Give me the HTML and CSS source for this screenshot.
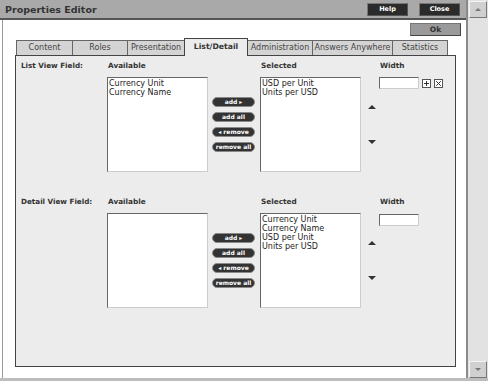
FILE: index.html
```html
<!DOCTYPE html>
<html lang="en">
<head>
  <meta charset="UTF-8" />
  <title>Properties Editor</title>
  <link rel="stylesheet" href="styles.css">
</head>
<body>
  <div class="window">
    <div class="main">
      <div class="titlebar">
        <span class="title">Properties Editor</span>
        <div class="title-btns">
          <button class="dark-btn">Help</button>
          <button class="dark-btn">Close</button>
        </div>
      </div>

      <div class="content">
        <div class="ok-row">
          <button class="ok-btn">Ok</button>
        </div>

        <div class="tabs">
          <div class="tab tab-content">Content</div>
          <div class="tab tab-roles">Roles</div>
          <div class="tab tab-pres">Presentation</div>
          <div class="tab tab-list active">List/Detail</div>
          <div class="tab tab-admin">Administration</div>
          <div class="tab tab-answers">Answers Anywhere</div>
          <div class="tab tab-stats last">Statistics</div>
        </div>

        <div class="panel">
          <!-- list view -->
          <div class="section">
            <div class="label">List View Field:</div>
            <div class="head">Available</div>
            <div></div>
            <div class="head">Selected</div>
            <div></div>
            <div class="head">Width</div>

            <div></div>
            <div class="listbox">
              <div>Currency Unit</div>
              <div>Currency Name</div>
            </div>
            <div class="movers">
              <button class="pill">add &#9656;</button>
              <button class="pill">add all</button>
              <button class="pill">&#9666; remove</button>
              <button class="pill">remove all</button>
            </div>
            <div class="listbox">
              <div>USD per Unit</div>
              <div>Units per USD</div>
            </div>
            <div class="order">
              <span class="arrow-up"></span>
              <span class="arrow-down"></span>
            </div>
            <div class="width-cell">
              <input class="width-input" type="text">
              <svg class="mini-icon" width="9" height="9" viewBox="0 0 9 9">
                <rect x="0.5" y="0.5" width="8" height="8" fill="#fff" stroke="#555"/>
                <path d="M4.5 2v5M2 4.5h5" stroke="#333" stroke-width="1"/>
              </svg>
              <svg class="mini-icon" width="9" height="9" viewBox="0 0 9 9">
                <rect x="0.5" y="0.5" width="8" height="8" fill="#fff" stroke="#555"/>
                <path d="M2.2 2.2l4.6 4.6M6.8 2.2l-4.6 4.6" stroke="#333" stroke-width="1"/>
              </svg>
            </div>
          </div>

          <!-- detail view -->
          <div class="section">
            <div class="label">Detail View Field:</div>
            <div class="head">Available</div>
            <div></div>
            <div class="head">Selected</div>
            <div></div>
            <div class="head">Width</div>

            <div></div>
            <div class="listbox"></div>
            <div class="movers">
              <button class="pill">add &#9656;</button>
              <button class="pill">add all</button>
              <button class="pill">&#9666; remove</button>
              <button class="pill">remove all</button>
            </div>
            <div class="listbox">
              <div>Currency Unit</div>
              <div>Currency Name</div>
              <div>USD per Unit</div>
              <div>Units per USD</div>
            </div>
            <div class="order">
              <span class="arrow-up"></span>
              <span class="arrow-down"></span>
            </div>
            <div class="width-cell detail">
              <input class="width-input" type="text">
            </div>
          </div>
        </div>
      </div>
    </div>

    <div class="scrollbar">
      <div class="sb-btn"><span class="sb-up"></span></div>
      <div class="sb-track"></div>
      <div class="sb-btn"><span class="sb-down"></span></div>
    </div>
  </div>
</body>
</html>
```

FILE: styles.css
```css
:root {
  --dark: #333;
  --panel: #ececec;
  --tab: #d4d4d4;
}

* {
  box-sizing: border-box;
}

body {
  margin: 0;
  font-family: "DejaVu Sans", Verdana, sans-serif;
  color: var(--dark);
  background: #fff;
}

.window {
  display: flex;
  width: 488px;
  height: 381px;
  border-bottom: 3px solid #bdbdbd;
}

.main {
  width: 468px;
  display: flex;
  flex-direction: column;
  border-right: 2px solid #8a8a8a;
}

.titlebar {
  height: 20px;
  display: flex;
  align-items: center;
  justify-content: space-between;
  background: #a9a9a9;
  border-bottom: 2px solid #555;
  padding: 0 6px 0 5px;
}

.title {
  font-size: 9.5px;
  font-weight: bold;
  color: #333;
}

.title-btns {
  display: flex;
  gap: 11px;
}

.dark-btn {
  width: 41px;
  height: 13px;
  padding: 0;
  font-family: inherit;
  font-size: 6.5px;
  font-weight: bold;
  color: #fff;
  background: #2b2b2b;
  border: 1px solid #777;
  border-right-color: #555;
  border-bottom-color: #555;
}

.content {
  flex: 1;
  margin-left: 2px;
  border-left: 1px solid #9a9a9a;
  padding: 3px 10px 11px 12px;
  display: flex;
  flex-direction: column;
}

.ok-row {
  display: flex;
  justify-content: flex-end;
  margin-right: -5px;
}

.ok-btn {
  width: 51px;
  height: 13px;
  padding: 0;
  font-family: inherit;
  font-size: 7.5px;
  font-weight: bold;
  color: #333;
  background: #9a9a9a;
  border: 1px solid #777;
  border-bottom-color: #444;
  border-right-color: #444;
}

.tabs {
  display: flex;
  align-items: flex-end;
  height: 17px;
  margin-top: 2px;
  padding-left: 1px;
  position: relative;
  z-index: 1;
}

.tab {
  height: 15px;
  font-size: 8px;
  line-height: 14px;
  text-align: center;
  background: var(--tab);
  border-top: 1px solid #666;
  border-left: 1px solid #666;
  color: #444;
}

.tab.last {
  border-right: 1px solid #666;
}

.tab.active {
  height: 18px;
  margin-bottom: -1px;
  background: var(--panel);
  border-top: 1px solid #444;
  border-left: 1px solid #444;
  border-right: 1px solid #444;
  font-weight: bold;
  font-size: 7.7px;
  line-height: 15px;
  color: #333;
}

.tab-content { width: 56px; }
.tab-roles { width: 55px; }
.tab-pres { width: 57px; }
.tab-list { width: 64px; }
.tab-admin { width: 64px; border-left: none; }
.tab-answers { width: 80px; }
.tab-stats { width: 56px; }

.panel {
  flex: 1;
  background: var(--panel);
  border: 1px solid #444;
  padding-top: 5px;
}

.section {
  display: grid;
  grid-template-columns: 91px 105px 48px 106px 13px 1fr;
  grid-template-rows: 16px 95px;
  margin-bottom: 25px;
}

.label {
  padding-left: 5px;
  font-size: 7.2px;
  font-weight: bold;
  line-height: 10px;
}

.head {
  font-size: 7.3px;
  font-weight: bold;
  line-height: 10px;
  padding-left: 1px;
}

.listbox {
  width: 101px;
  height: 95px;
  background: #fff;
  border: 1px solid #ccc;
  border-top-color: #666;
  border-left-color: #666;
  padding: 1px 1px;
  font-size: 8px;
  line-height: 9px;
  color: #222;
}

.movers {
  display: flex;
  flex-direction: column;
  justify-content: center;
  gap: 4.7px;
}

.pill {
  width: 43px;
  height: 10px;
  padding: 0;
  font-family: inherit;
  font-size: 6px;
  font-weight: bold;
  line-height: 8px;
  color: #fff;
  background: #333;
  border: 1px solid #8a8a8a;
  border-radius: 5px;
  white-space: nowrap;
}

.order {
  display: flex;
  flex-direction: column;
  justify-content: center;
  align-items: center;
  gap: 31px;
  padding-right: 1px;
}

.arrow-up,
.arrow-down {
  width: 0;
  height: 0;
  border-left: 4px solid transparent;
  border-right: 4px solid transparent;
}

.arrow-up {
  border-bottom: 4px solid #333;
}

.arrow-down {
  border-top: 4px solid #333;
}

.width-cell {
  display: flex;
  align-items: center;
  align-self: start;
  gap: 3px;
}

.width-cell.detail {
  margin-top: 1px;
}

.width-input {
  width: 40px;
  height: 12px;
  padding: 0;
  background: #fff;
  border: 1px solid #ccc;
  border-top-color: #666;
  border-left-color: #666;
  margin-right: 0;
}

.mini-icon {
  display: block;
}

.scrollbar {
  width: 20px;
  display: flex;
  flex-direction: column;
  background: #e2e2e2;
  padding: 1px 1px 0 1px;
}

.sb-btn {
  height: 17px;
  width: 18px;
  display: flex;
  align-items: center;
  justify-content: center;
  background: #d0d0d0;
  border: 1px solid #f4f4f4;
  border-right-color: #777;
  border-bottom-color: #777;
}

.sb-track {
  flex: 1;
}

.sb-up,
.sb-down {
  width: 0;
  height: 0;
  border-left: 3px solid transparent;
  border-right: 3px solid transparent;
}

.sb-up {
  border-bottom: 3px solid #777;
}

.sb-down {
  border-top: 3px solid #777;
}
```
